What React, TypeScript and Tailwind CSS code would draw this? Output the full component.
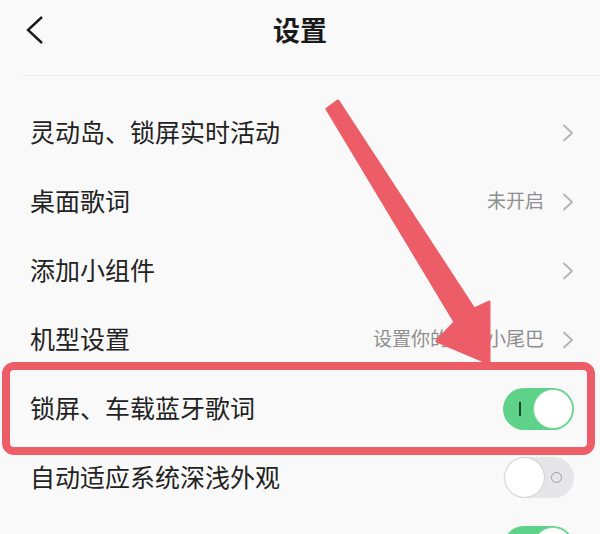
import React from "react";

const Chevron = () => (
  <svg width="12" height="18" viewBox="0 0 12 18" className="shrink-0">
    <polyline points="2,1.5 10,9 2,16.5" fill="none" stroke="#b3b3b3" strokeWidth="1.8" strokeLinecap="round" strokeLinejoin="round" />
  </svg>
);

const ToggleOn = () => (
  <div className="relative w-[71px] h-[42px] rounded-full bg-[#5fd28a] shrink-0">
    <div className="absolute left-[16px] top-[14px] w-[2px] h-[14px] bg-[#17472a]" />
    <div className="absolute right-[1px] top-[1px] w-[40px] h-[40px] rounded-full bg-white border border-[#7fd9a0]" />
  </div>
);

const ToggleOff = () => (
  <div className="relative w-[70px] h-[41px] rounded-full bg-[#e6e6e8] shrink-0">
    <div className="absolute right-[12px] top-[15px] w-[11px] h-[11px] rounded-full border-[1.5px] border-[#9c9c9c]" />
    <div className="absolute left-[1px] top-[1px] w-[39px] h-[39px] rounded-full bg-white shadow-[0_0_2px_rgba(0,0,0,0.25)]" />
  </div>
);

type Row = { label: string; value?: string; right: "chev" | "on" | "off" };

const rows: Row[] = [
  { label: "灵动岛、锁屏实时活动", right: "chev" },
  { label: "桌面歌词", value: "未开启", right: "chev" },
  { label: "添加小组件", right: "chev" },
  { label: "机型设置", value: "设置你的个性小尾巴", right: "chev" },
  { label: "锁屏、车载蓝牙歌词", right: "on" },
  { label: "自动适应系统深浅外观", right: "off" },
  { label: "", right: "on" },
];

export default function App() {
  return (
    <div
      className="relative w-[600px] h-[534px] overflow-hidden bg-[#f9f9f9] text-[#222]"
      style={{ fontFamily: '"Noto Sans", "Noto Sans CJK SC", sans-serif' }}
    >
      <div className="relative h-[60px] flex items-center justify-center">
        <svg width="20" height="30" viewBox="0 0 20 30" className="absolute left-[25px] top-[15px]">
          <polyline points="17,2 3,15 17,28" fill="none" stroke="#1a1a1a" strokeWidth="2.4" strokeLinejoin="miter" />
        </svg>
        <span className="text-[27px] font-bold text-[#1a1a1a] leading-none">设置</span>
      </div>
      <div className="h-[15px]" />
      <div className="ml-[22px] h-px bg-[#ececec]" />
      <div className="h-[22px]" />
      <div className="flex flex-col">
        {rows.map((r, i) => (
          <div key={i} className="h-[69px] flex items-center pl-[30px] pr-[26px]">
            <span className="flex-1 text-[25px] leading-none text-[#222]">{r.label}</span>
            {r.right === "chev" && (
              <div className="flex items-center gap-[18px]">
                {r.value && <span className="text-[19px] text-[#8e8e8e] leading-none">{r.value}</span>}
                <Chevron />
              </div>
            )}
            {r.right === "on" && <ToggleOn />}
            {r.right === "off" && <ToggleOff />}
          </div>
        ))}
      </div>

      <div className="absolute left-[2px] top-[362px] w-[593px] h-[93px] border-[8px] border-[#ec5d68] rounded-[12px] pointer-events-none" />

      <svg className="absolute left-0 top-0 pointer-events-none" width="600" height="534" viewBox="0 0 600 534">
        <polygon
          points="327,109 338,101 474,309 489,302 489,363 437,341 455,322"
          fill="#ec5d68"
          stroke="#ec5d68"
          strokeWidth="3"
          strokeLinejoin="round"
        />
      </svg>
    </div>
  );
}
